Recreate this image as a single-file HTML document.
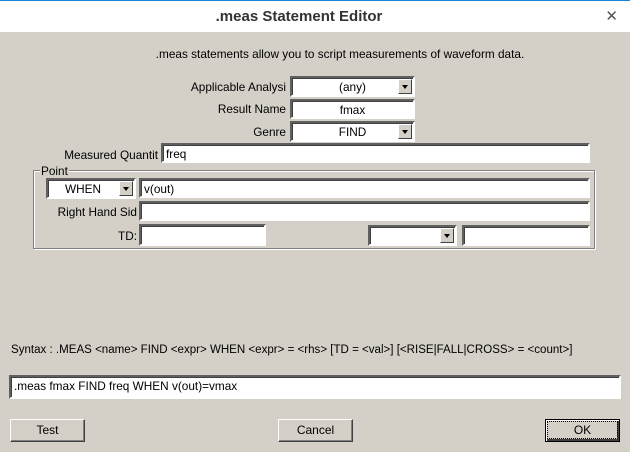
<!DOCTYPE html>
<html><head><style>
*{box-sizing:border-box;margin:0;padding:0}
body{width:630px;height:452px;background:#d4d0c8;font-family:"Liberation Sans",sans-serif;font-size:11.8px;color:#000;position:relative;overflow:hidden}
.title{position:absolute;left:0;top:0;width:630px;height:32px;background:#fff;border-top:1px solid #1883d7;text-align:center;font-size:15px;font-weight:bold;color:#333;line-height:32px;padding-right:32px}
.x{position:absolute;right:12px;top:0;font-size:15px;font-weight:normal;color:#555}
.a{position:absolute}
.f{position:absolute;background:#fff;border:2px solid;border-color:#606060 #fff #fff #606060;box-shadow:inset 1px 1px 0 #404040;padding-left:4px;line-height:18px;white-space:nowrap;overflow:hidden}
.c{text-align:center;padding-left:0}
.arr{position:absolute;right:1px;top:1px;width:14px;height:15px;background:#d4d0c8;border:1px solid;border-color:#fff #404040 #404040 #fff}
.arr:after{content:"";position:absolute;left:3px;top:5px;border-left:3.5px solid transparent;border-right:3.5px solid transparent;border-top:4px solid #000}
.l{position:absolute;text-align:right;white-space:nowrap}
.btn{position:absolute;width:75px;height:23px;background:#d4d0c8;border:1px solid;border-color:#fff #404040 #404040 #fff;box-shadow:inset -1px -1px 0 #808080;text-align:center;line-height:21px;font-size:12px}
.grp{position:absolute;left:33px;top:170px;width:562px;height:79px;border:1px solid #808080;box-shadow:1px 1px 0 #fff inset,1px 1px 0 #fff}
</style></head><body>
<div class="title">.meas Statement Editor<span class="x">✕</span></div>
<div class="a" style="left:0;width:630px;text-align:center;top:47px;padding-left:50px;font-size:11.8px">.meas statements allow you to script measurements of waveform data.</div>

<div class="l" style="right:344px;top:80px">Applicable Analysi</div>
<div class="f c" style="left:290px;top:76px;width:125px;height:21px">(any)<div class="arr"></div></div>
<div class="l" style="right:344px;top:102px">Result Name</div>
<div class="f c" style="left:290px;top:99px;width:125px;height:20px">fmax</div>
<div class="l" style="right:344px;top:125px">Genre</div>
<div class="f c" style="left:290px;top:121px;width:125px;height:21px">FIND<div class="arr"></div></div>
<div class="l" style="right:472px;top:148px">Measured Quantit</div>
<div class="f" style="left:161px;top:143px;width:429px;height:20px;padding-left:3px">freq</div>

<div class="grp"></div>
<div class="a" style="left:40px;top:164px;background:#d4d0c8;padding:0 1px">Point</div>
<div class="f c" style="left:46px;top:178px;width:90px;height:21px;padding-right:16px">WHEN<div class="arr"></div></div>
<div class="f" style="left:139px;top:178px;width:451px;height:20px;padding-left:3px">v(out)</div>
<div class="l" style="right:493px;top:205px">Right Hand Sid</div>
<div class="f" style="left:139px;top:201px;width:451px;height:20px"></div>
<div class="l" style="right:493px;top:229px">TD:</div>
<div class="f" style="left:139px;top:224px;width:127px;height:22px"></div>
<div class="f" style="left:368px;top:225px;width:89px;height:21px"><div class="arr"></div></div>
<div class="f" style="left:462px;top:225px;width:128px;height:21px"></div>

<div class="a" style="left:11px;top:344px;font-size:11.55px">Syntax : .MEAS &lt;name&gt; FIND &lt;expr&gt; WHEN &lt;expr&gt; = &lt;rhs&gt; [TD = &lt;val&gt;] [&lt;RISE|FALL|CROSS&gt; = &lt;count&gt;]</div>
<div class="f" style="left:9px;top:375px;width:612px;height:24px;line-height:19px;padding-left:3px">.meas fmax FIND freq WHEN v(out)=vmax</div>

<div class="btn" style="left:10px;top:419px">Test</div>
<div class="btn" style="left:278px;top:419px">Cancel</div>
<div class="btn" style="left:545px;top:419px;border:1px solid #000;box-shadow:inset 1px 1px 0 #fff,inset -2px -2px 0 #404040"><span style="outline:1px dotted #000;padding:1px 26px">OK</span></div>
</body></html>
